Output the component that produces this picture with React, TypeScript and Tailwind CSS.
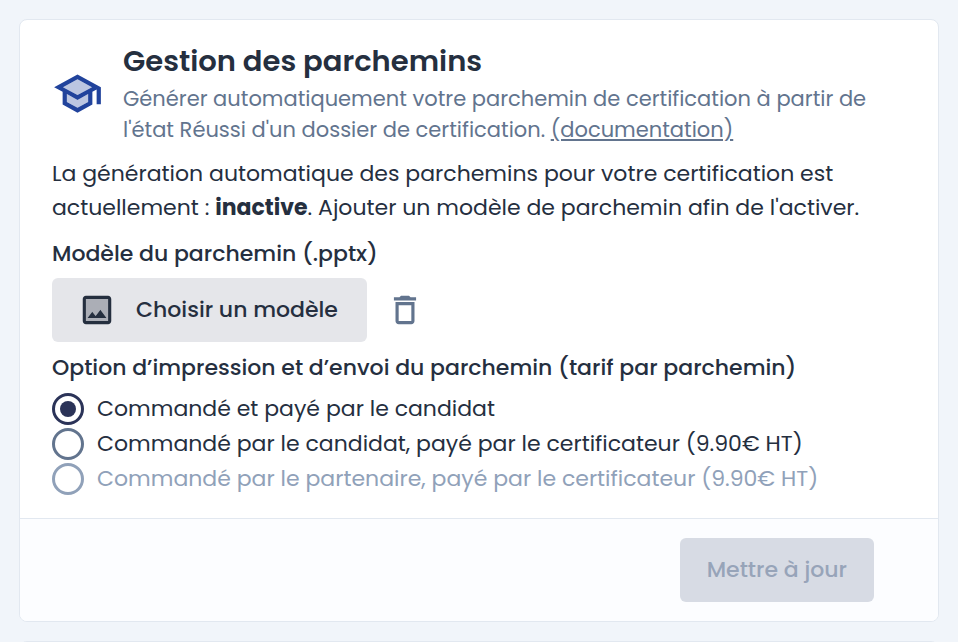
import { useState } from 'react';
import { clsx } from 'clsx';

const options = [
    { value: 'candidate', label: 'Commandé et payé par le candidat', disabled: false },
    { value: 'certifier', label: 'Commandé par le candidat, payé par le certificateur (9.90€ HT)', disabled: false },
    { value: 'partner', label: 'Commandé par le partenaire, payé par le certificateur (9.90€ HT)', disabled: true },
];

function SchoolIcon() {
    return (
        <svg viewBox="0 0 24 24" fill="currentColor" className="size-[51px] shrink-0 text-[#21439c]" aria-hidden="true">
            <path opacity=".3" d="M7 12.27V16l5 2.72L17 16v-3.73L12 15l-5-2.73zM5.18 9L12 12.72 18.82 9 12 5.28 5.18 9z" />
            <path d="M12 3L1 9l4 2.18v6L12 21l7-3.82v-6l2-1.09V17h2V9L12 3zm6.82 6L12 12.72 5.18 9 12 5.28 18.82 9zM17 16l-5 2.72L7 16v-3.73L12 15l5-2.73V16z" />
        </svg>
    );
}

function PhotoIcon() {
    return (
        <svg viewBox="0 0 24 24" fill="currentColor" className="size-[38px] shrink-0" aria-hidden="true">
            <path opacity=".3" d="M5 19h14V5H5v14zm4-5.86l2.14 2.58 3-3.86L18 17H6l3-3.86z" />
            <path d="M19 3H5c-1.1 0-2 .9-2 2v14c0 1.1.9 2 2 2h14c1.1 0 2-.9 2-2V5c0-1.1-.9-2-2-2zm0 16H5V5h14v14zm-4.86-7.14l-3 3.86L9 13.14 6 17h12l-3.86-5.14z" />
        </svg>
    );
}

function TrashIcon() {
    return (
        <svg viewBox="0 0 24 24" fill="currentColor" className="size-[38px]" aria-hidden="true">
            <path d="M6 19c0 1.1.9 2 2 2h8c1.1 0 2-.9 2-2V7H6v12zM8 9h8v10H8V9zm7.5-5l-1-1h-5l-1 1H5v2h14V4h-3.5z" />
        </svg>
    );
}

export default function App() {
    const [option, setOption] = useState('candidate');

    return (
        <main className="min-h-screen overflow-hidden bg-[#f1f5fa] px-[19px] pt-[19px] font-['Poppins','Inter',sans-serif] text-[22px] leading-[34px] text-[#252f3f]">
            <section className="overflow-hidden rounded-lg border border-slate-200 bg-white">
                <div className="px-8 pt-[21px] pb-[22px]">
                    <header className="flex items-center gap-5">
                        <SchoolIcon />
                        <div>
                            <h1 className="mb-0.5 text-[29px] leading-10 font-semibold">Gestion des parchemins</h1>
                            <p className="text-[21px] leading-[31px] text-slate-500">
                                Générer automatiquement votre parchemin de certification à partir de
                                <br />
                                l'état Réussi d'un dossier de certification.{' '}
                                <a href="#documentation" className="underline">(documentation)</a>
                            </p>
                        </div>
                    </header>

                    <p className="mt-3">
                        La génération automatique des parchemins pour votre certification est
                        <br />
                        actuellement : <strong className="font-bold">inactive</strong>. Ajouter un modèle de parchemin afin de l'activer.
                    </p>

                    <h2 className="mt-3 font-medium">Modèle du parchemin (.pptx)</h2>
                    <div className="mt-[7px] flex items-center gap-[19px]">
                        <button className="flex h-16 items-center gap-5 rounded-md bg-[#e5e6ea] pr-[29px] pl-[26px] font-medium">
                            <PhotoIcon />
                            Choisir un modèle
                        </button>
                        <button className="text-slate-500" aria-label="Supprimer le modèle">
                            <TrashIcon />
                        </button>
                    </div>

                    <fieldset className="mt-[9px]">
                        <legend className="mb-1.5 font-medium">Option d’impression et d’envoi du parchemin (tarif par parchemin)</legend>
                        {options.map(({ value, label, disabled }) => (
                            <label key={value} className={clsx('flex h-[35px] items-center gap-[13px]', disabled && 'text-slate-400')}>
                                <input
                                    type="radio"
                                    name="print-option"
                                    value={value}
                                    checked={option === value}
                                    disabled={disabled}
                                    onChange={() => setOption(value)}
                                    className="grid size-8 shrink-0 appearance-none place-items-center rounded-full border-3 border-slate-500 before:size-4 before:rounded-full checked:border-[#2b3358] checked:before:bg-[#2b3358] disabled:border-slate-400"
                                />
                                {label}
                            </label>
                        ))}
                    </fieldset>
                </div>

                <footer className="flex justify-end border-t border-slate-200 bg-[#fcfdff] py-[19px] pr-16 pl-8">
                    <button disabled className="h-16 rounded-md bg-[#d7dbe4] px-[27px] font-medium text-[#97a4b9]">
                        Mettre à jour
                    </button>
                </footer>
            </section>
            <section className="mt-[19px] h-8 rounded-lg border border-slate-200 bg-white" />
        </main>
    );
}
